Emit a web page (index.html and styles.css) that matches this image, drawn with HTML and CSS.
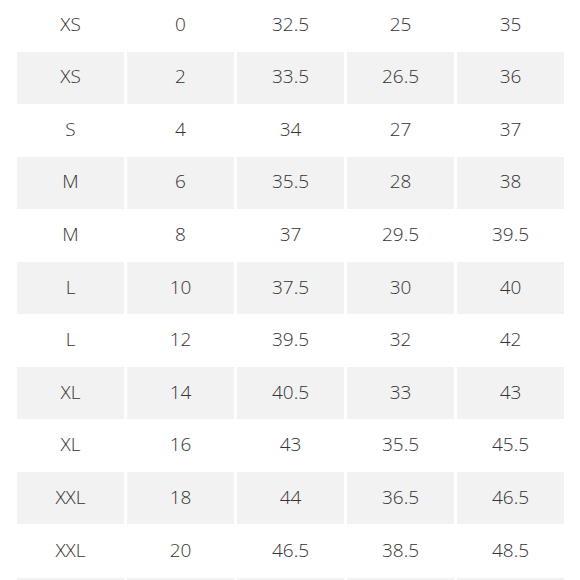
FILE: index.html
```html
<!DOCTYPE html>
<html>
<head>
<meta charset="utf-8">
<link rel="stylesheet" href="styles.css">
</head>
<body>
<div class="table">
  <div class="row"><div>XS</div><div>0</div><div>32.5</div><div>25</div><div>35</div></div>
  <div class="row shade"><div>XS</div><div>2</div><div>33.5</div><div>26.5</div><div>36</div></div>
  <div class="row"><div>S</div><div>4</div><div>34</div><div>27</div><div>37</div></div>
  <div class="row shade"><div>M</div><div>6</div><div>35.5</div><div>28</div><div>38</div></div>
  <div class="row"><div>M</div><div>8</div><div>37</div><div>29.5</div><div>39.5</div></div>
  <div class="row shade"><div>L</div><div>10</div><div>37.5</div><div>30</div><div>40</div></div>
  <div class="row"><div>L</div><div>12</div><div>39.5</div><div>32</div><div>42</div></div>
  <div class="row shade"><div>XL</div><div>14</div><div>40.5</div><div>33</div><div>43</div></div>
  <div class="row"><div>XL</div><div>16</div><div>43</div><div>35.5</div><div>45.5</div></div>
  <div class="row shade"><div>XXL</div><div>18</div><div>44</div><div>36.5</div><div>46.5</div></div>
  <div class="row"><div>XXL</div><div>20</div><div>46.5</div><div>38.5</div><div>48.5</div></div>
  <div class="row shade"><div></div><div></div><div></div><div></div><div></div></div>
</div>
</body>
</html>
```
FILE: styles.css
```css
html, body {
  margin: 0;
  padding: 0;
  background: #fff;
  overflow: hidden;
}
.table {
  margin: -0.9px 0 0 17px;
  width: 547px;
  font-family: "Open Sans", Lato, sans-serif;
  font-weight: 300;
  font-size: 19px;
  color: #333;
}
.row {
  display: grid;
  grid-template-columns: repeat(5, 107px);
  column-gap: 3px;
  height: 52.6px;
}
.row > div {
  display: flex;
  align-items: center;
  justify-content: center;
  height: 52px;
  box-sizing: border-box;
  padding-bottom: 3px;
}
.shade > div {
  background: #f2f2f2;
}
```
